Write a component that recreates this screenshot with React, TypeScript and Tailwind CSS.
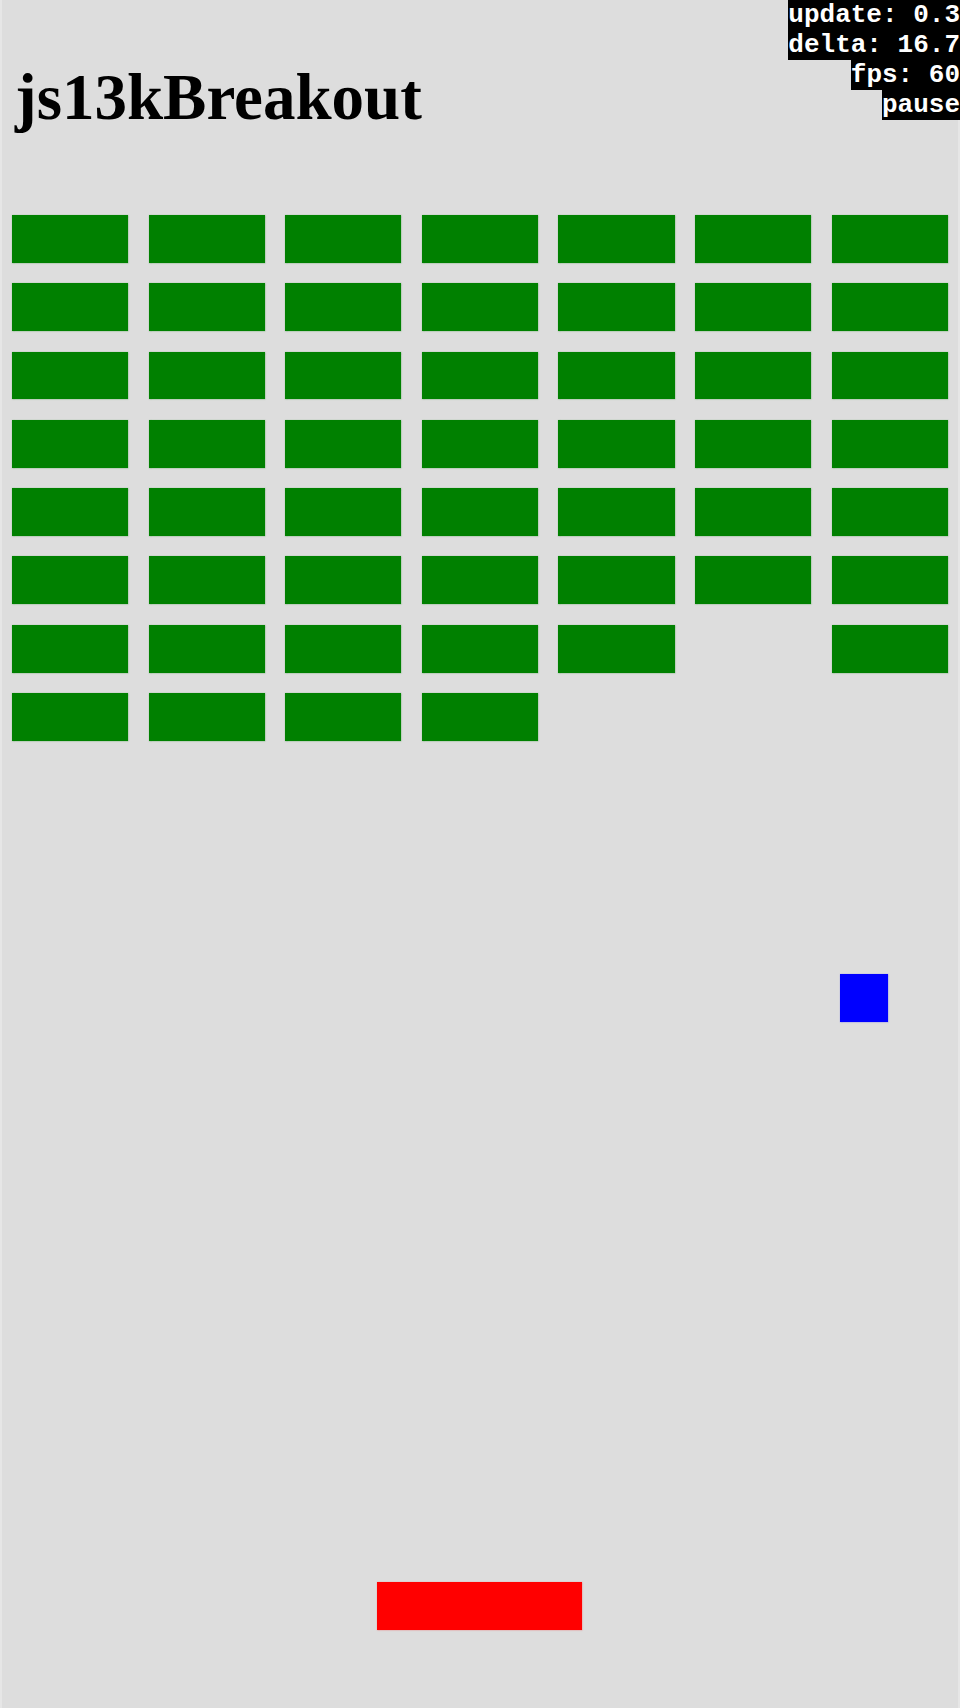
import React from "react";

const ROWS: number[][] = [
  [1, 1, 1, 1, 1, 1, 1],
  [1, 1, 1, 1, 1, 1, 1],
  [1, 1, 1, 1, 1, 1, 1],
  [1, 1, 1, 1, 1, 1, 1],
  [1, 1, 1, 1, 1, 1, 1],
  [1, 1, 1, 1, 1, 1, 1],
  [1, 1, 1, 1, 1, 0, 1],
  [1, 1, 1, 1, 0, 0, 0],
];

const HUD = ["update: 0.3", "delta: 16.7", "fps: 60", "pause"];

export default function App() {
  return (
    <div className="w-[960px] h-[1708px] bg-[#e6e6e6] px-[2px] overflow-hidden relative">
      <div className="relative w-[956px] h-[1708px] bg-[#dddddd]">
        <h1
          className="absolute left-[13px] top-[65px] text-[65px] leading-none font-bold text-black m-0"
          style={{ fontFamily: '"Liberation Serif", "Times New Roman", serif' }}
        >
          js13kBreakout
        </h1>

        <div className="pt-[215px] pl-[10.24px]">
          <div className="grid grid-cols-[repeat(7,116.1px)] auto-rows-[47.8px] gap-x-[20.47px] gap-y-[20.5px]">
            {ROWS.flatMap((row, r) =>
              row.map((b, c) => (
                <div
                  key={`${r}-${c}`}
                  className={
                    b
                      ? "bg-[#008000] shadow-[0_0_1.5px_0.5px_rgba(0,128,0,0.45)]"
                      : ""
                  }
                />
              ))
            )}
          </div>
        </div>

        <div className="absolute left-[838px] top-[974px] w-[48px] h-[48px] bg-[#0000ff] shadow-[0_0_1.5px_0.5px_rgba(0,0,255,0.4)]" />

        <div className="absolute left-[375px] top-[1582px] w-[205px] h-[47.5px] bg-[#ff0000] shadow-[0_0_1.5px_0.5px_rgba(255,0,0,0.4)]" />
      </div>

      <div
        className="absolute right-0 top-0 flex flex-col items-end text-white font-bold text-[26px] leading-[30px]"
        style={{ fontFamily: '"Liberation Mono", "Courier New", monospace' }}
      >
        {HUD.map((t) => (
          <div key={t} className="bg-black whitespace-pre">
            {t}
          </div>
        ))}
      </div>
    </div>
  );
}
